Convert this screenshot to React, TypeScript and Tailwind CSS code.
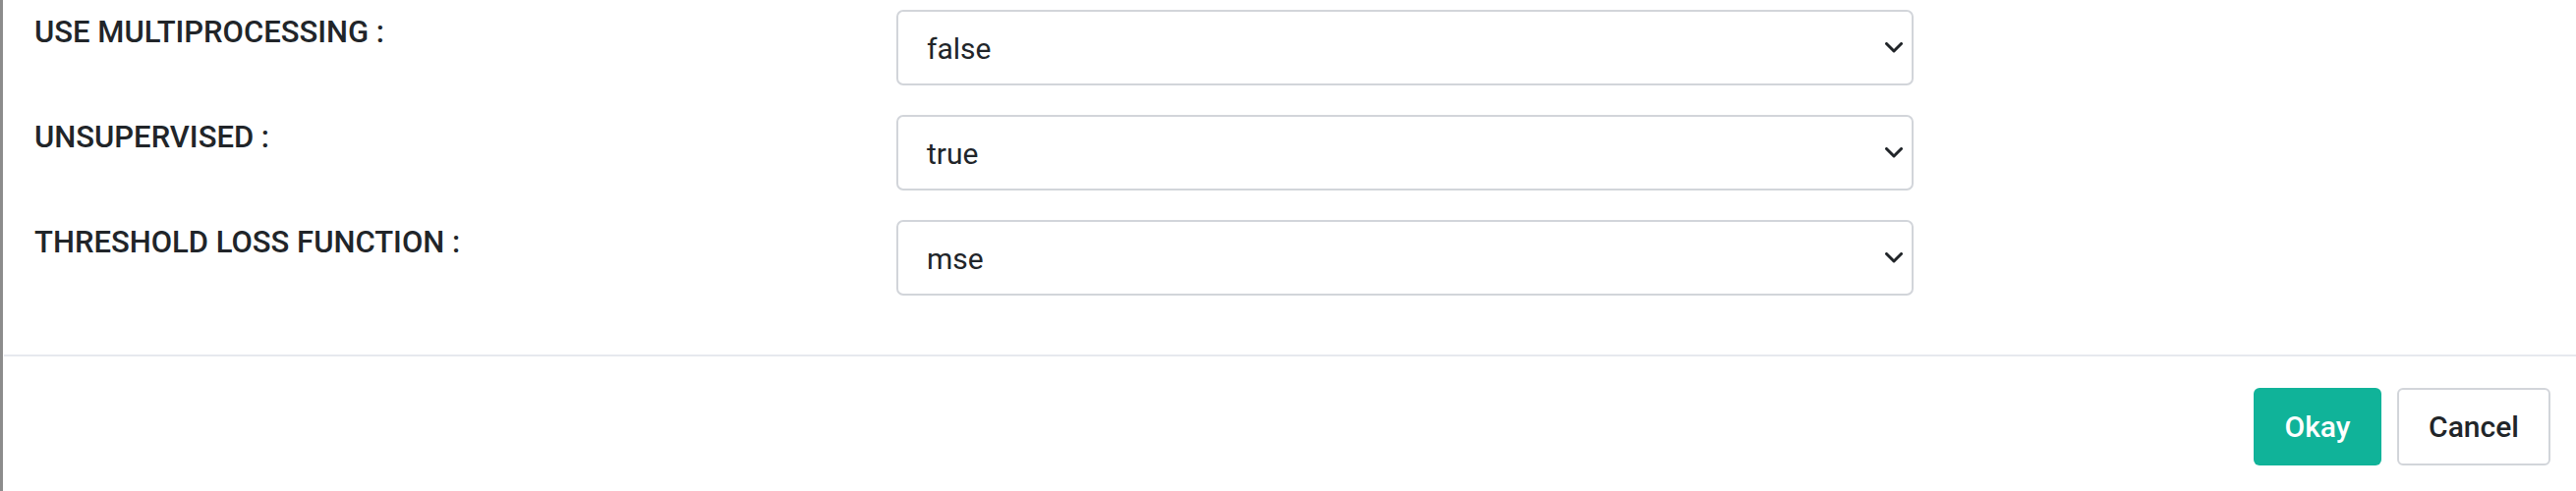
import React from "react";

function Chevron() {
  return (
    <svg width="18" height="11" viewBox="0 0 18 11" fill="none">
      <path d="M1.5 1.5 L9 9 L16.5 1.5" stroke="#212529" strokeWidth="3" strokeLinecap="round" strokeLinejoin="round" />
    </svg>
  );
}

function Row({ label, value }: { label: string; value: string }) {
  return (
    <div className="flex items-start">
      <div className="w-[909px] pl-[32px] text-[31px] leading-[1.5] font-medium text-[#212529]">
        {label}
      </div>
      <div className="w-[1035px] h-[77px] border-2 border-[#d2d5da] rounded-[7px] flex items-center justify-between pl-[29px] pr-[9px] bg-white">
        <span className="text-[30px] text-[#212529] pt-[2px]">{value}</span>
        <Chevron />
      </div>
    </div>
  );
}

export default function App() {
  return (
    <div
      className="w-[2621px] h-[500px] bg-white border-l-[3px] border-[#8c8c8c] flex flex-col"
      style={{ fontFamily: "Roboto, 'Noto Sans', sans-serif" }}
    >
      <div className="flex flex-col gap-[30px] pt-[10px]">
        <Row label="USE MULTIPROCESSING :" value="false" />
        <Row label="UNSUPERVISED :" value="true" />
        <Row label="THRESHOLD LOSS FUNCTION :" value="mse" />
      </div>
      <div className="mt-[60px] ml-[1px] h-[2px] bg-[#e6e9ee]" />
      <div className="flex justify-end gap-[16px] pr-[26px] pt-[32px]">
        <button className="h-[79px] w-[130px] rounded-[6px] bg-[#10b399] text-white text-[30px] font-medium flex items-center justify-center">
          Okay
        </button>
        <button className="h-[79px] w-[156px] rounded-[6px] bg-white border-2 border-[#d2d5da] text-[#212529] text-[30px] font-medium flex items-center justify-center">
          Cancel
        </button>
      </div>
    </div>
  );
}
